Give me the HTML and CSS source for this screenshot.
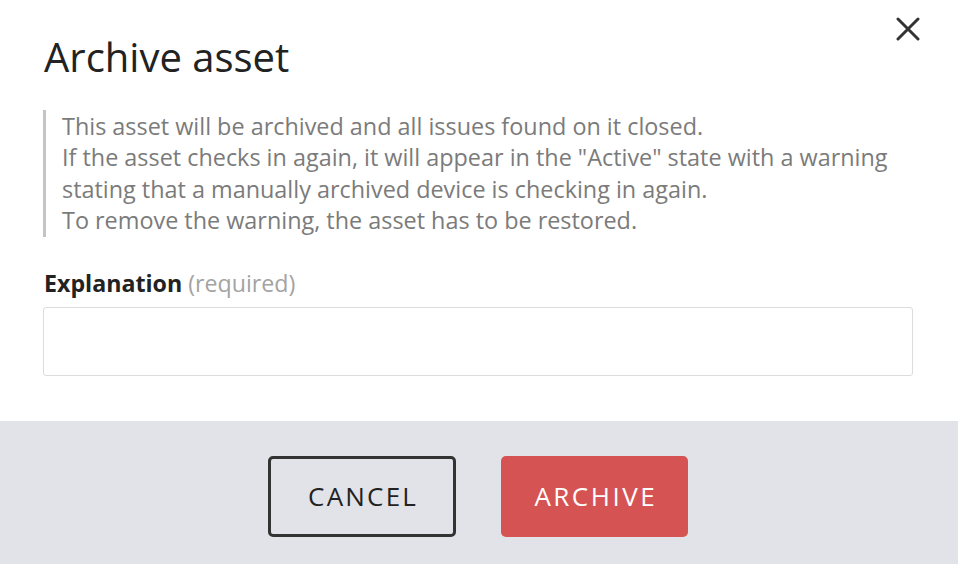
FILE: index.html
```html
<!DOCTYPE html>
<html lang="en">
<head>
<meta charset="utf-8">
<title>Archive asset</title>
<link rel="stylesheet" href="styles.css">
</head>
<body>
<div class="dialog">
  <button class="close" aria-label="Close">
    <svg viewBox="0 0 24 24" width="24" height="24"><path d="M2 2 L22 22 M22 2 L2 22" fill="none" stroke="#333" stroke-width="3" stroke-linecap="round"/></svg>
  </button>
  <div class="dialog-body">
    <h1 class="title">Archive asset</h1>
    <blockquote class="note">This asset will be archived and all issues found on it closed.<br>If the asset checks in again, it will appear in the "Active" state with a warning stating that a manually archived device is checking in again.<br>To remove the warning, the asset has to be restored.</blockquote>
    <label class="field-label" for="explanation"><strong>Explanation</strong> <span class="hint">(required)</span></label>
    <input class="field-input" id="explanation" type="text">
  </div>
  <div class="dialog-footer">
    <button class="btn btn-outline">Cancel</button>
    <button class="btn btn-danger">Archive</button>
  </div>
</div>
</body>
</html>
```
FILE: styles.css
```css
html, body {
  margin: 0;
  padding: 0;
  height: 100%;
  background: #fff;
}
body {
  font-family: "Open Sans", "Liberation Sans", sans-serif;
  color: #222;
}
.dialog {
  position: relative;
  display: flex;
  flex-direction: column;
  height: 100%;
}
.close {
  position: absolute;
  top: 17px;
  right: 38px;
  width: 24px;
  height: 24px;
  padding: 0;
  border: 0;
  background: none;
  cursor: pointer;
}
.close svg { display: block; }
.dialog-body {
  display: flex;
  flex-direction: column;
  padding: 30px 45px 45px 43px;
}
.title {
  margin: 0 0 0 1px;
  font-size: 40px;
  font-weight: 400;
  line-height: 54px;
  color: #222;
}
.note {
  margin: 26px 0 0 0;
  padding: 1px 0 0 16px;
  border-left: 3px solid #c4c4c4;
  font-size: 23.4px;
  line-height: 31.4px;
  color: #7b7b7b;
}
.field-label {
  margin: 31px 0 0 1px;
  font-size: 23.2px;
  line-height: 31px;
  color: #222;
}
.field-label strong { font-weight: 700; }
.hint { color: #a3a3a3; font-weight: 400; }
.field-input {
  margin-top: 8px;
  box-sizing: border-box;
  height: 69px;
  width: 100%;
  border: 1px solid #dcdcdc;
  border-radius: 3px;
  padding: 0 16px;
  font: inherit;
  font-size: 20px;
  outline: none;
}
.dialog-footer {
  flex: 1;
  background: #e2e3e8;
  display: flex;
  justify-content: center;
  align-items: flex-start;
  gap: 45px;
  padding: 35px 2px 0 0;
}
.btn {
  box-sizing: border-box;
  width: 188px;
  height: 81px;
  border-radius: 5px;
  font-family: "Open Sans", "Liberation Sans", sans-serif;
  font-size: 26px;
  font-weight: 400;
  letter-spacing: 2.2px;
  text-transform: uppercase;
  padding: 0 0 0 2.2px;
  cursor: pointer;
}
.btn-outline {
  background: transparent;
  border: 3px solid #333;
  color: #222;
}
.btn-danger {
  width: 187px;
  background: #d65353;
  border: 0;
  color: #fff;
  letter-spacing: 2.5px;
  padding-left: 2.5px;
}
```
